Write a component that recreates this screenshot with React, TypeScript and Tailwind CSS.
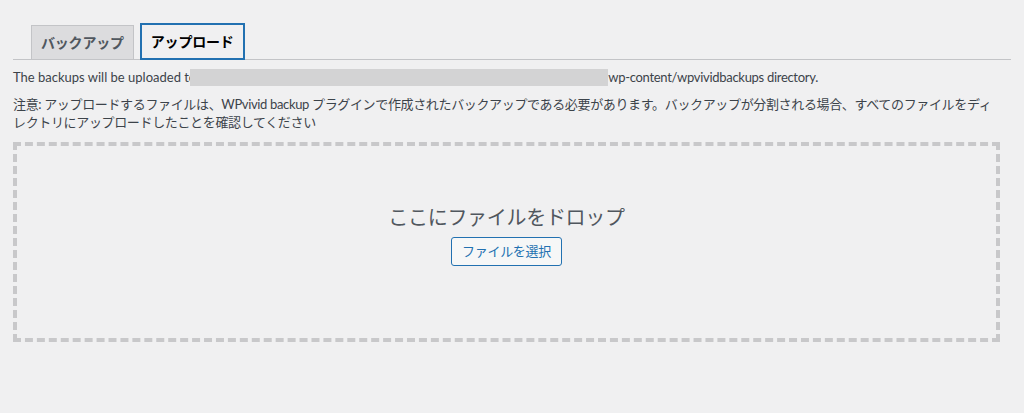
import React from "react";

const jp = "font-['Segoe_UI','Lato','Noto_Sans_CJK_JP',sans-serif]";

export default function App() {
  return (
    <div className={`min-h-screen bg-[#f0f0f1] px-[13px] pt-[23px] text-[#3c434a] ${jp}`}>
      <div className="flex items-end gap-[6px] border-b border-[#c3c4c7] pl-[18px]">
        <div className="mb-[-1px] h-[35px] border border-[#c3c4c7] bg-[#dcdcde] px-[9px] text-[14px] font-semibold leading-[33px] tracking-[-0.2px] text-[#50575e]">
          バックアップ
        </div>
        <div className="mb-[-1px] h-[37px] border-2 border-[#2271b1] bg-[#f0f0f1] px-[9px] text-[14px] font-semibold leading-[33px] tracking-[-0.2px] text-black">
          アップロード
        </div>
      </div>
      <p className="mt-[8px] flex h-[18px] items-center whitespace-nowrap text-[13px] leading-[18px]">
        <span>The backups will be uploaded to</span>
        <span className="relative z-10 ml-[-6px] h-[17px] w-[418px] bg-[#d3d3d4]" />
        <span className="tracking-[-0.3px]">wp-content/wpvividbackups directory.</span>
      </p>
      <p className="mt-[9px] whitespace-nowrap text-[13px] leading-[18px] tracking-[-0.35px]">
        注意: アップロードするファイルは、WPvivid backup プラグインで作成されたバックアップである必要があります。バックアップが分割される場合、すべてのファイルをディ
        <br />
        レクトリにアップロードしたことを確認してください
      </p>
      <div className="mt-[11px] flex h-[200px] w-[987px] flex-col items-center border-4 border-dashed border-[#c8c8ca] pt-[57px]">
        <div className="text-[20px] leading-[28px] tracking-[-0.3px] text-[#50575e]">ここにファイルをドロップ</div>
        <button className="mt-[6px] h-[29px] rounded-[3px] border border-[#2271b1] bg-[#f6f7f7] px-[10px] text-[13px] tracking-[-0.3px] text-[#2271b1]">
          ファイルを選択
        </button>
      </div>
    </div>
  );
}
